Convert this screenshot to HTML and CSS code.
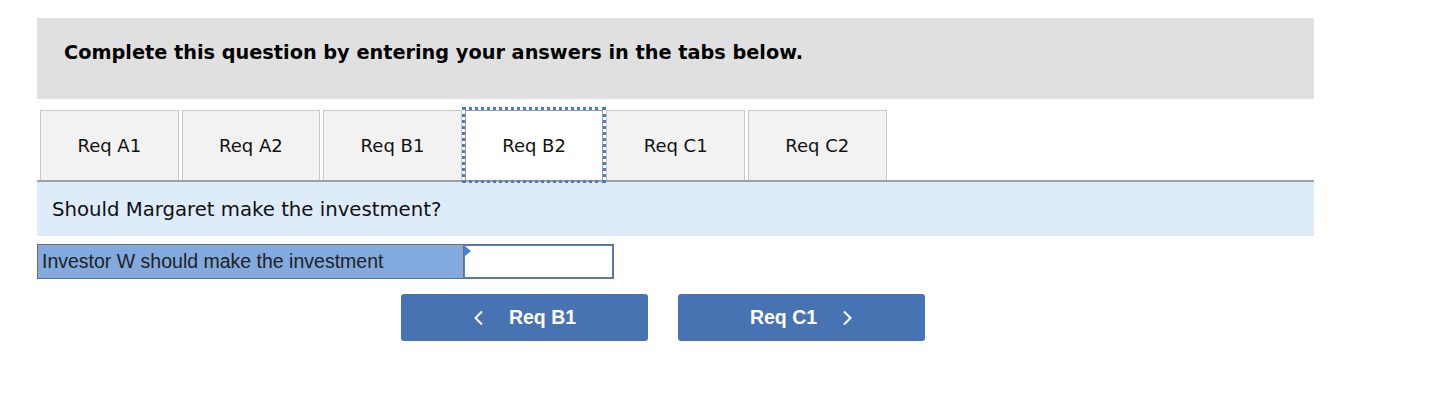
FILE: index.html
```html
<html>
	<head>
		<meta charset="UTF-8">
		<link rel="stylesheet" href="styles.css">
	</head>
	<body>
		<div class="page">
			<div class="consigne">
				<h2>Complete this question by entering your answers in the tabs below.</h2>
			</div>
			<div class="onglets">
				<a class="onglet">Req A1</a>
				<a class="onglet">Req A2</a>
				<a class="onglet">Req B1</a>
				<a class="onglet actif">Req B2</a>
				<a class="onglet">Req C1</a>
				<a class="onglet">Req C2</a>
			</div>
			<div class="question">Should Margaret make the investment?</div>
			<div class="reponse">
				<div class="libelle">Investor W should make the investment</div>
				<div class="saisie"><span class="coin"></span></div>
			</div>
			<div class="navigation">
				<a class="bouton">
					<svg width="11" height="16" viewBox="0 0 11 16"><path d="M9 1.5 L2.5 8 L9 14.5" fill="none" stroke="#fff" stroke-width="2"/></svg>
					<span>Req B1</span>
				</a>
				<a class="bouton">
					<span>Req C1</span>
					<svg width="11" height="16" viewBox="0 0 11 16"><path d="M2 1.5 L8.5 8 L2 14.5" fill="none" stroke="#fff" stroke-width="2"/></svg>
				</a>
			</div>
		</div>
	</body>
</html>
```

FILE: styles.css
```css
body {
	margin: 0;
	background: #fff;
	font-family: "DejaVu Sans", Verdana, sans-serif;
	color: #000;
}
.page {
	width: 1277px;
	margin: 18px 0 0 37px;
}
.consigne {
	background: #e0e0e0;
	height: 81px;
	padding: 0 27px;
	display: flex;
	align-items: center;
}
.consigne h2 {
	margin: 0 0 12px 0;
	font-size: 19.3px;
	font-weight: bold;
}
.onglets {
	display: flex;
	gap: 3px;
	padding: 11px 0 0 3px;
	border-bottom: 2px solid #a0a0a0;
}
.onglet {
	width: 136.6px;
	height: 69px;
	background: #f2f2f2;
	border: 1px solid #c8c8c8;
	border-bottom: none;
	display: flex;
	align-items: center;
	justify-content: center;
	font-size: 18px;
	color: #111;
}
.onglet.actif {
	background: #fff;
	border-color: #999;
	outline: 3px dotted #4d7cc7;
	outline-offset: 0;
}
.question {
	background: #deebf8;
	height: 54px;
	padding: 0 15px;
	display: flex;
	align-items: center;
	font-size: 19.7px;
	color: #111;
}
.reponse {
	display: flex;
	margin-top: 8px;
	height: 35px;
}
.libelle {
	width: 421px;
	background: #82aadf;
	border: 1px solid #6f6f6f;
	border-right: none;
	font-family: "Liberation Sans", Arial, sans-serif;
	font-size: 19.5px;
	color: #222;
	padding-left: 4px;
	display: flex;
	align-items: center;
}
.saisie {
	position: relative;
	width: 149px;
	background: #fff;
	border: 1px solid #6f6f6f;
	box-shadow: inset 0 0 0 1px #4d7fd6;
}
.coin {
	position: absolute;
	left: 1px;
	top: 1px;
	border-left: 6px solid #4d7fd6;
	border-top: 5px solid transparent;
	border-bottom: 5px solid transparent;
	height: 0;
	width: 0;
}
.navigation {
	display: flex;
	gap: 30px;
	margin: 15px 0 0 364px;
}
.bouton {
	width: 247px;
	height: 47px;
	background: #4773b3;
	border-radius: 3px;
	display: flex;
	align-items: center;
	justify-content: center;
	gap: 25px;
	font-family: "Liberation Sans", Arial, sans-serif;
	font-weight: bold;
	font-size: 19.5px;
	color: #fff;
}
```
